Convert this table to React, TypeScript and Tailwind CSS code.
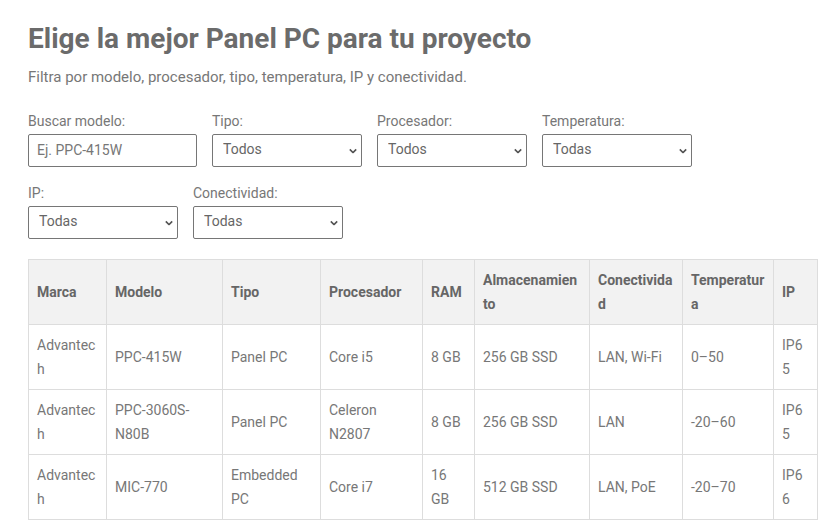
import { ChangeEvent, useState } from 'react';

type Row = {
  marca: string;
  modelo: string;
  tipo: string;
  procesador: string;
  ram: string;
  almacenamiento: string;
  conectividad: string;
  temperatura: string;
  ip: string;
};

const rows: Row[] = [
  {
    marca: 'Advantech',
    modelo: 'PPC-415W',
    tipo: 'Panel PC',
    procesador: 'Core i5',
    ram: '8 GB',
    almacenamiento: '256 GB SSD',
    conectividad: 'LAN, Wi-Fi',
    temperatura: '0–50',
    ip: 'IP65',
  },
  {
    marca: 'Advantech',
    modelo: 'PPC-3060S-N80B',
    tipo: 'Panel PC',
    procesador: 'Celeron N2807',
    ram: '8 GB',
    almacenamiento: '256 GB SSD',
    conectividad: 'LAN',
    temperatura: '-20–60',
    ip: 'IP65',
  },
  {
    marca: 'Advantech',
    modelo: 'MIC-770',
    tipo: 'Embedded PC',
    procesador: 'Core i7',
    ram: '16 GB',
    almacenamiento: '512 GB SSD',
    conectividad: 'LAN, PoE',
    temperatura: '-20–70',
    ip: 'IP66',
  },
];

const headers = [
  'Marca',
  'Modelo',
  'Tipo',
  'Procesador',
  'RAM',
  'Almacenamiento',
  'Conectividad',
  'Temperatura',
  'IP',
];

const widths = [78, 116, 98, 102, 52, 115, 93, 91, 44];

function Chevron() {
  return (
    <svg
      viewBox="0 0 10 6"
      className="absolute right-[5px] top-1/2 -translate-y-1/2 w-[8px] h-[5px] pointer-events-none"
    >
      <path d="M1 1l4 4 4-4" fill="none" stroke="#555" strokeWidth="2" />
    </svg>
  );
}

function SelectField({
  label,
  value,
  options,
}: {
  label: string;
  value: string;
  options: string[];
}) {
  const [current, setCurrent] = useState(value);
  return (
    <label className="flex flex-col w-[150px]">
      <span className="leading-[20px] mb-[3px]">{label}</span>
      <div className="relative">
        <select
          value={current}
          onChange={(e: ChangeEvent<HTMLSelectElement>) => setCurrent(e.target.value)}
          className="appearance-none w-full h-[33px] border border-[#767676] rounded-[2px] bg-white pl-[10px] pr-6 text-[14px] text-[#666] leading-none pb-[3px]"
        >
          {options.map((o) => (
            <option key={o}>{o}</option>
          ))}
        </select>
        <Chevron />
      </div>
    </label>
  );
}

export default function App() {
  const [query, setQuery] = useState('');

  return (
    <div className="bg-white min-h-[528px] px-[28px] pt-[21px] text-[#777] text-[14px] font-['Roboto',sans-serif]">
      <h1 className="text-[28px] leading-[36px] font-bold text-[#6b6b6b]">
        Elige la mejor Panel PC para tu proyecto
      </h1>
      <p className="mt-[9px] text-[15px] leading-[22px]">
        Filtra por modelo, procesador, tipo, temperatura, IP y conectividad.
      </p>

      <div className="mt-[23px] flex flex-wrap gap-x-[15px] gap-y-[8px] w-[680px]">
        <label className="flex flex-col w-[169px]">
          <span className="leading-[20px] mb-[3px]">Buscar modelo:</span>
          <input
            type="text"
            value={query}
            onChange={(e: ChangeEvent<HTMLInputElement>) => setQuery(e.target.value)}
            placeholder="Ej. PPC-415W"
            className="h-[33px] border border-[#767676] rounded-[2px] px-[8px] text-[14px] text-[#666] placeholder:text-[#777] pb-[2px]"
          />
        </label>
        <SelectField label="Tipo:" value="Todos" options={['Todos', 'Panel PC', 'Embedded PC']} />
        <SelectField label="Procesador:" value="Todos" options={['Todos', 'Core i5', 'Core i7', 'Celeron N2807']} />
        <SelectField label="Temperatura:" value="Todas" options={['Todas', '0–50', '-20–60', '-20–70']} />
        <div className="basis-full h-0" />
        <SelectField label="IP:" value="Todas" options={['Todas', 'IP65', 'IP66']} />
        <SelectField label="Conectividad:" value="Todas" options={['Todas', 'LAN', 'LAN, Wi-Fi', 'LAN, PoE']} />
      </div>

      <table className="mt-[20px] table-fixed border-collapse w-[789px] text-[14px] leading-[24px]">
        <colgroup>
          {widths.map((w, i) => (
            <col key={i} style={{ width: w }} />
          ))}
        </colgroup>
        <thead>
          <tr className="bg-[#f2f2f2] h-[65px]">
            {headers.map((h) => (
              <th
                key={h}
                className="border border-[#ddd] px-[8px] py-[8px] text-left font-bold text-[#666] break-all align-middle"
              >
                {h}
              </th>
            ))}
          </tr>
        </thead>
        <tbody>
          {rows.map((r) => (
            <tr key={r.modelo} className="h-[65px]">
              {[
                r.marca,
                r.modelo,
                r.tipo,
                r.procesador,
                r.ram,
                r.almacenamiento,
                r.conectividad,
                r.temperatura,
                r.ip,
              ].map((v, i) => (
                <td
                  key={i}
                  className="border border-[#ddd] px-[8px] py-[8px] break-words [overflow-wrap:anywhere] align-middle"
                >
                  {v}
                </td>
              ))}
            </tr>
          ))}
        </tbody>
      </table>
    </div>
  );
}
